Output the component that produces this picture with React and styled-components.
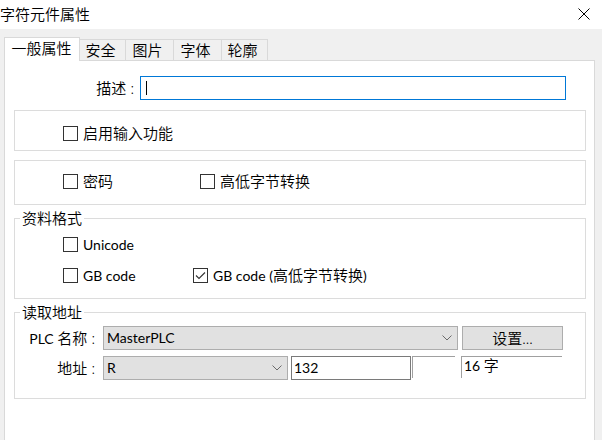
import React from "react";
import styled, { createGlobalStyle } from "styled-components";

const Global = createGlobalStyle`
  html, body { margin: 0; padding: 0; background: #fff; }
  body {
    font-family: "Lato", "Noto Sans CJK SC", sans-serif;
    font-size: 15px;
    font-weight: 350;
    color: #000;
    text-autospace: no-autospace;
  }
  * { box-sizing: border-box; }
`;

const Lat = styled.span`
  font-family: "Lato", "Noto Sans", sans-serif;
  font-size: 14px;
  font-weight: 400;
`;

const Window = styled.div`
  width: 602px;
  height: 440px;
  overflow: hidden;
  display: flex;
  flex-direction: column;
  background: #f0f0f0;
`;

const TitleBar = styled.div`
  height: 29px;
  flex: none;
  background: #fff;
  display: flex;
  align-items: center;
  justify-content: space-between;
  padding: 0 12px 2px 0;
`;

const Title = styled.span`
  font-size: 15px;
  line-height: 16px;
`;

const Body = styled.div`
  flex: 1;
  display: flex;
  flex-direction: column;
  padding: 8px 7px 0 4px;
`;

const TabRow = styled.div`
  display: flex;
  align-items: flex-end;
  height: 24px;
  margin-bottom: -1px;
  flex: none;
`;

const Tab = styled.div`
  position: relative;
  z-index: ${(p) => (p.$active ? 2 : 1)};
  width: ${(p) => p.$w}px;
  height: ${(p) => (p.$active ? 24 : 21)}px;
  margin-bottom: ${(p) => (p.$active ? 0 : 1)}px;
  margin-left: ${(p) => (p.$first ? 0 : -1)}px;
  background: ${(p) => (p.$active ? "#fff" : "#f0f0f0")};
  border: 1px solid #d9d9d9;
  border-bottom: none;
  display: flex;
  align-items: center;
  justify-content: center;
  padding-right: ${(p) => (p.$active ? 1 : 4)}px;
  padding-bottom: ${(p) => (p.$active ? 3 : 1)}px;
  font-size: 15px;
  line-height: 16px;
`;

const Panel = styled.div`
  flex: 1;
  background: #fff;
  border: 1px solid #d9d9d9;
  border-bottom: none;
  display: flex;
  flex-direction: column;
  padding: 15px 8px 0 9px;
`;

const DescRow = styled.div`
  display: flex;
  align-items: center;
  height: 24px;
`;

const DescLabel = styled.span`
  width: 120px;
  text-align: right;
  margin-right: 6px;
  line-height: 16px;
`;

const DescInput = styled.div`
  width: 426px;
  height: 24px;
  border: 1px solid #0078d7;
  background: #fff;
  display: flex;
  align-items: center;
  padding-left: 5px;
`;

const Caret = styled.span`
  width: 1px;
  height: 14px;
  background: #000;
`;

const Group = styled.div`
  margin-top: ${(p) => p.$mt}px;
  border: 1px solid #dcdcdc;
`;

const FieldGroup = styled.fieldset`
  margin: ${(p) => p.$mt}px 0 0 0;
  min-width: 0;
  border: 1px solid #dcdcdc;
  padding: 0;
`;

const GroupBody = styled.div`
  padding: ${(p) => p.$pad};
  display: flex;
  flex-direction: column;
  gap: ${(p) => p.$gap || 0}px;
`;

const Legend = styled.legend`
  margin-left: 5px;
  padding: 0 2px;
  font-size: 15px;
  line-height: 16px;
`;

const Row = styled.div`
  display: flex;
  align-items: ${(p) => p.$align || "center"};
  height: ${(p) => p.$h || 20}px;
`;

const CheckItem = styled.label`
  display: flex;
  align-items: center;
  gap: 5px;
  width: ${(p) => (p.$w ? `${p.$w}px` : "auto")};
  line-height: 16px;
  font-size: 15px;
`;

const Box = styled.span`
  width: 15px;
  height: 15px;
  border: 1px solid #333;
  background: #fff;
  display: flex;
  align-items: center;
  justify-content: center;
  flex: none;
`;

const FieldLabel = styled.span`
  width: 80px;
  text-align: right;
  margin-right: 8px;
  line-height: 24px;
  white-space: nowrap;
`;

const Combo = styled.div`
  width: ${(p) => p.$w}px;
  height: 24px;
  background: #e1e1e1;
  border: 1px solid #adadad;
  display: flex;
  align-items: center;
  justify-content: space-between;
  padding: 0 5px 0 3px;
  line-height: 16px;
  flex: none;
`;

const Button = styled.div`
  width: 101px;
  height: 24px;
  margin-left: 4px;
  background: #e1e1e1;
  border: 1px solid #adadad;
  display: flex;
  align-items: center;
  justify-content: center;
  line-height: 16px;
`;

const TextInput = styled.div`
  width: 120px;
  height: 24px;
  margin-left: 3px;
  border: 1px solid #7a7a7a;
  background: #fff;
  display: flex;
  align-items: center;
  padding-left: 2px;
  line-height: 16px;
`;

const Etched = styled.div`
  width: ${(p) => p.$w}px;
  height: 22px;
  margin-left: ${(p) => p.$ml}px;
  border-top: 1px solid #a0a0a0;
  border-left: 1px solid #a0a0a0;
  padding: 0 2px;
  line-height: 17px;
`;

const Check = ({ checked, children, w }) => (
  <CheckItem $w={w}>
    <Box>
      {checked && (
        <svg width="13" height="13" viewBox="0 0 13 13">
          <polyline points="2,6.5 5,9.5 11,3.5" fill="none" stroke="#333" strokeWidth="1.1" />
        </svg>
      )}
    </Box>
    <span>{children}</span>
  </CheckItem>
);

const Chevron = () => (
  <svg width="10" height="6" viewBox="0 0 10 6">
    <polyline points="0.5,0.5 5,5 9.5,0.5" fill="none" stroke="#6a6a6a" strokeWidth="1" />
  </svg>
);

const tabs = [
  { t: "一般属性", w: 76 },
  { t: "安全", w: 47 },
  { t: "图片", w: 49 },
  { t: "字体", w: 49 },
  { t: "轮廓", w: 47 },
];

export default function App() {
  return (
    <>
      <Global />
      <Window>
        <TitleBar>
          <Title>字符元件属性</Title>
          <svg width="12" height="12" viewBox="0 0 12 12">
            <path d="M0.5 0.5 L11.5 11.5 M11.5 0.5 L0.5 11.5" stroke="#000" strokeWidth="1" />
          </svg>
        </TitleBar>
        <Body>
          <TabRow>
            {tabs.map((tb, i) => (
              <Tab key={tb.t} $w={tb.w} $active={i === 0} $first={i === 0}>
                {tb.t}
              </Tab>
            ))}
          </TabRow>
          <Panel>
            <DescRow>
              <DescLabel>描述 :</DescLabel>
              <DescInput>
                <Caret />
              </DescInput>
            </DescRow>

            <Group $mt={10}>
              <GroupBody $pad="12px 0 7px 48px">
                <Row>
                  <Check>启用输入功能</Check>
                </Row>
              </GroupBody>
            </Group>

            <Group $mt={9}>
              <GroupBody $pad="10px 0 13px 48px">
                <Row>
                  <Check w={137}>密码</Check>
                  <Check>高低字节转换</Check>
                </Row>
              </GroupBody>
            </Group>

            <FieldGroup $mt={5}>
              <Legend>资料格式</Legend>
              <GroupBody $pad="8px 0 13px 48px" $gap={11}>
                <Row>
                  <Check><Lat>Unicode</Lat></Check>
                </Row>
                <Row>
                  <Check w={130}><Lat>GB code</Lat></Check>
                  <Check checked><Lat>GB code (</Lat>高低字节转换<Lat>)</Lat></Check>
                </Row>
              </GroupBody>
            </FieldGroup>

            <FieldGroup $mt={5}>
              <Legend>读取地址</Legend>
              <GroupBody $pad="6px 0 18px 0" $gap={6}>
                <Row $h={24}>
                  <FieldLabel><Lat>PLC </Lat>名称 :</FieldLabel>
                  <Combo $w={355}>
                    <Lat>MasterPLC</Lat>
                    <Chevron />
                  </Combo>
                  <Button>设置...</Button>
                </Row>
                <Row $h={24} $align="flex-start">
                  <FieldLabel>地址 :</FieldLabel>
                  <Combo $w={185}>
                    <Lat>R</Lat>
                    <Chevron />
                  </Combo>
                  <TextInput><Lat>132</Lat></TextInput>
                  <Etched $w={43} $ml={1} />
                  <Etched $w={101} $ml={6}><Lat>16 </Lat>字</Etched>
                </Row>
              </GroupBody>
            </FieldGroup>
          </Panel>
        </Body>
      </Window>
    </>
  );
}
